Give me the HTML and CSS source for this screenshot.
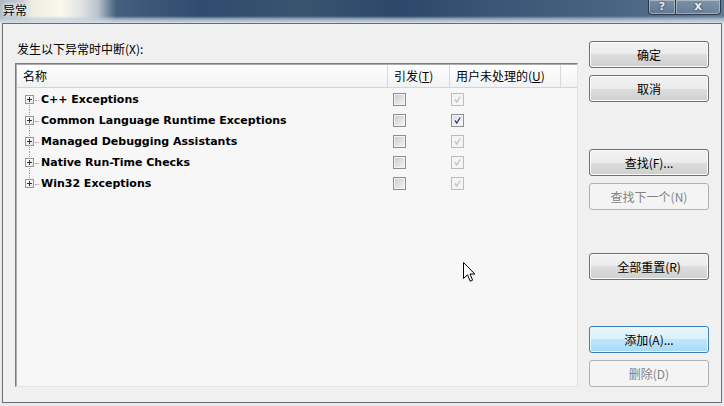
FILE: index.html
```html
<!DOCTYPE html>
<html lang="zh-CN">
<head>
    <meta charset="UTF-8">
    <title>异常</title>
    <link rel="stylesheet" href="styles.css">
</head>
<body>
    <div class="titlebar">
        <span class="title">异常</span>
        <div class="caption-buttons">
            <span class="cap-btn help">?</span>
            <span class="cap-btn close">x</span>
        </div>
    </div>

    <div class="dialog">
        <div class="main">
            <div class="prompt">发生以下异常时中断(X):</div>
            <div class="list">
                <div class="list-header">
                    <div class="col col-name">名称</div>
                    <div class="col col-thrown">引发(<u>T</u>)</div>
                    <div class="col col-user">用户未处理的(<u>U</u>)</div>
                    <div class="col col-fill"></div>
                </div>
                <div class="list-body">
                    <div class="row first">
                        <div class="cell-name"><span class="expander"></span><span class="name">C++ Exceptions</span></div>
                        <div class="cell-thrown"><span class="check"></span></div>
                        <div class="cell-user"><span class="check disabled"><svg viewBox="0 0 11 11"><path d="M3 5.5 L4.8 8 L8.2 2.5"/></svg></span></div>
                    </div>
                    <div class="row">
                        <div class="cell-name"><span class="expander"></span><span class="name">Common Language Runtime Exceptions</span></div>
                        <div class="cell-thrown"><span class="check"></span></div>
                        <div class="cell-user"><span class="check checked"><svg viewBox="0 0 11 11"><path d="M3 5.5 L4.8 8 L8.2 2.5"/></svg></span></div>
                    </div>
                    <div class="row">
                        <div class="cell-name"><span class="expander"></span><span class="name">Managed Debugging Assistants</span></div>
                        <div class="cell-thrown"><span class="check"></span></div>
                        <div class="cell-user"><span class="check disabled"><svg viewBox="0 0 11 11"><path d="M3 5.5 L4.8 8 L8.2 2.5"/></svg></span></div>
                    </div>
                    <div class="row">
                        <div class="cell-name"><span class="expander"></span><span class="name">Native Run-Time Checks</span></div>
                        <div class="cell-thrown"><span class="check"></span></div>
                        <div class="cell-user"><span class="check disabled"><svg viewBox="0 0 11 11"><path d="M3 5.5 L4.8 8 L8.2 2.5"/></svg></span></div>
                    </div>
                    <div class="row last">
                        <div class="cell-name"><span class="expander"></span><span class="name">Win32 Exceptions</span></div>
                        <div class="cell-thrown"><span class="check"></span></div>
                        <div class="cell-user"><span class="check disabled"><svg viewBox="0 0 11 11"><path d="M3 5.5 L4.8 8 L8.2 2.5"/></svg></span></div>
                    </div>
                </div>
            </div>
        </div>

        <div class="side">
            <button class="btn">确定</button>
            <button class="btn gap-s">取消</button>
            <button class="btn gap-find">查找(F)...</button>
            <button class="btn gap-s" disabled>查找下一个(N)</button>
            <button class="btn gap-reset">全部重置(R)</button>
            <button class="btn hot gap-add">添加(A)...</button>
            <button class="btn gap-s" disabled>删除(D)</button>
        </div>
    </div>

    <svg class="cursor" width="13" height="21" viewBox="0 0 13 21">
        <path d="M0.5 0.5 L0.5 16.5 L4.5 12.8 L7.2 19.2 L9.6 18.2 L7 12 L11.8 12 Z" fill="#fff" stroke="#000" stroke-width="1"/>
    </svg>
</body>
</html>
```

FILE: styles.css
```css
body {
    margin: 0;
    width: 724px;
    height: 406px;
    overflow: hidden;
    position: relative;
    background: #e6eaee;
    font-family: "Noto Sans CJK SC", sans-serif;
    font-size: 12px;
    color: #000;
}

/* aero title bar */
.titlebar {
    height: 23px;
    display: flex;
    justify-content: space-between;
    background:
        linear-gradient(to bottom, rgba(0,0,0,0) 0, rgba(0,0,0,0) 16px, rgba(190,205,218,0.7) 19px, #d6dee6 23px),
        linear-gradient(to right, #aeb9c3 0, #c2c9ce 22px, #efeee3 32px, #faf8ec 62px, #dfe3e4 82px, #b8c2cb 98px, #44607f 116px, #2f4b6e 200px, #38546f 300px, #2c4769 400px, #3b5676 500px, #4a6582 620px, #607a92 724px);
}
.title {
    padding: 2px 0 0 3px;
    line-height: 16px;
    text-shadow: 0 0 4px #fff, 0 0 6px #fff;
}
.caption-buttons {
    display: flex;
    margin-right: 3px;
    height: 15px;
}
.cap-btn {
    box-sizing: border-box;
    height: 15px;
    border: 1px solid rgba(25, 38, 55, 0.8);
    border-top: none;
    box-shadow: inset 0 0 0 1px rgba(255, 255, 255, 0.35);
    background: linear-gradient(rgba(255,255,255,0.22), rgba(255,255,255,0.08));
    color: #e6ecf1;
    font-family: "DejaVu Sans", sans-serif;
    font-weight: bold;
    text-align: center;
    text-shadow: 0 0 2px #223;
    line-height: 13px;
}
.help {
    width: 27px;
    font-size: 11px;
    border-radius: 0 0 0 4px;
    border-right: none;
}
.close {
    width: 46px;
    font-size: 12px;
    border-radius: 0 0 4px 0;
}

/* dialog client area */
.dialog {
    margin-left: 2px;
    width: 718px;
    height: 378px;
    border: 1px solid #6d6d6d;
    background: #f0f0f0;
    display: flex;
}
.main {
    padding: 17px 0 0 12px;
}
.prompt {
    line-height: 16px;
    height: 16px;
    margin: 0 0 6px 2px;
}

.list {
    box-sizing: border-box;
    width: 563px;
    height: 324px;
    padding: 1px 0 0 1px;
    border: 1px solid;
    border-color: #7c7c7c #e3e3e3 #e3e3e3 #7c7c7c;
    background:
        linear-gradient(#ababab, #ababab) top left / 100% 1px no-repeat,
        linear-gradient(#ababab, #ababab) top left / 1px 100% no-repeat,
        #f7f7f7;
}
.list-header {
    display: flex;
    height: 22px;
    border-bottom: 1px solid #d5d5d5;
    background: linear-gradient(#ffffff, #f1f2f4);
}
.col {
    box-sizing: border-box;
    height: 22px;
    line-height: 22px;
    padding-left: 6px;
    border-right: 1px solid #d8d8d8;
}
.col-name { width: 371px; }
.col-thrown { width: 62px; }
.col-user { width: 111px; }
.col-fill { flex: 1; border-right: none; }
u { text-decoration-thickness: 1px; text-underline-offset: 1px; }

.list-body {
    padding-top: 1px;
}
.row {
    display: flex;
    align-items: center;
    height: 21px;
    position: relative;
}
.row::before {
    content: "";
    position: absolute;
    left: 12px;
    top: 0;
    bottom: 0;
    border-left: 1px dotted #a0a0a0;
}
.row.first::before { top: 50%; }
.row.last::before { bottom: 50%; }

.cell-name {
    width: 371px;
    display: flex;
    align-items: center;
    padding-left: 8px;
    box-sizing: border-box;
}
.expander {
    position: relative;
    box-sizing: border-box;
    width: 9px;
    height: 9px;
    border: 1px solid #969696;
    background: linear-gradient(135deg, #ffffff, #e6e6e6);
    z-index: 1;
}
.expander::before {
    content: "";
    position: absolute;
    left: 1px;
    top: 3px;
    width: 5px;
    height: 1px;
    background: #333;
    box-shadow: 2px -2px 0 -0px transparent;
}
.expander::after {
    content: "";
    position: absolute;
    left: 3px;
    top: 1px;
    width: 1px;
    height: 5px;
    background: #333;
}
.name {
    position: relative;
    margin-left: 7px;
    font-family: "DejaVu Sans", sans-serif;
    font-weight: bold;
    font-size: 11px;
}
.name::before {
    content: "";
    position: absolute;
    left: -6px;
    top: 50%;
    width: 4px;
    border-top: 1px dotted #a0a0a0;
}

.cell-thrown {
    width: 62px;
    padding-left: 5px;
    box-sizing: border-box;
    display: flex;
}
.cell-user {
    width: 111px;
    padding-left: 1px;
    box-sizing: border-box;
    display: flex;
}
.check {
    box-sizing: border-box;
    width: 13px;
    height: 13px;
    border: 1px solid #8e8f8f;
    box-shadow: inset 0 0 0 1px #f2f2f2;
    background: linear-gradient(135deg, #c9c9c9, #f6f6f6);
    display: flex;
}
.check svg {
    width: 11px;
    height: 11px;
    fill: none;
    stroke-width: 1.3;
}
.check.checked {
    background: linear-gradient(135deg, #dcdcdc, #fbfbfb);
}
.check.checked svg { stroke: #2b3f8c; }
.check.disabled {
    border-color: #bdbdbd;
    background: #f4f4f4;
    box-shadow: none;
}
.check.disabled svg { stroke: #c4c4c4; }

/* command buttons */
.side {
    margin-left: 11px;
    padding-top: 17px;
    width: 120px;
    display: flex;
    flex-direction: column;
}
.btn {
    box-sizing: border-box;
    height: 27px;
    padding: 0;
    border: 1px solid #707070;
    border-radius: 3px;
    box-shadow: inset 0 0 0 1px #fbfbfb;
    background: linear-gradient(#f2f2f2 0%, #ebebeb 50%, #dddddd 50%, #cfcfcf 100%);
    font-family: "Noto Sans CJK SC", sans-serif;
    font-size: 12px;
    color: #000;
    text-align: center;
}
.btn:disabled {
    border-color: #adb2b5;
    background: #f4f4f4;
    box-shadow: none;
    color: #838383;
}
.btn.hot {
    border-color: #3c7fb1;
    box-shadow: inset 0 0 0 1px #ecf7fd;
    background: linear-gradient(#eaf6fd 0%, #d9f0fc 50%, #bee6fd 50%, #a7d9f5 100%);
}
.gap-s { margin-top: 7px; }
.gap-find { margin-top: 47px; }
.gap-reset { margin-top: 43px; }
.gap-add { margin-top: 46px; }

.cursor {
    position: absolute;
    left: 463px;
    top: 262px;
}
```
